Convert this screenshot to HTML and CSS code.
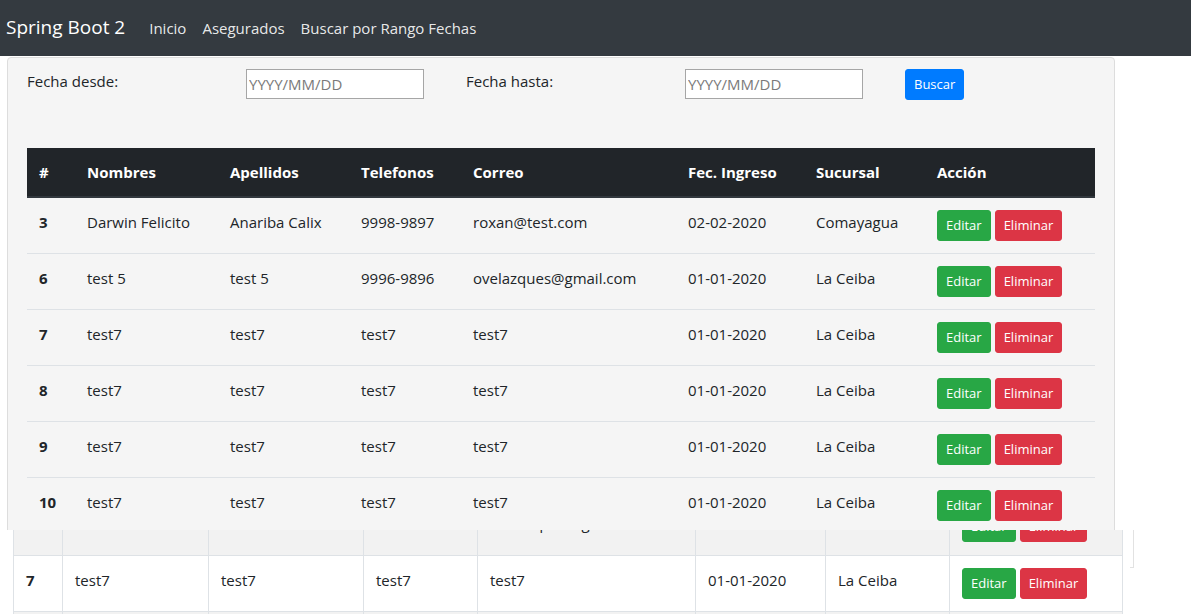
FILE: index.html
```html
<!DOCTYPE html>
<html lang="es">
<head>
<meta charset="utf-8">
<title>Spring Boot 2</title>
<link rel="stylesheet" href="styles.css">
</head>
<body>
<nav class="navbar">
  <a class="brand" href="#">Spring Boot 2</a>
  <ul class="nav-links">
    <li><a href="#">Inicio</a></li>
    <li><a href="#">Asegurados</a></li>
    <li><a href="#">Buscar por Rango Fechas</a></li>
  </ul>
</nav>

<div class="page-top">
  <div class="card">
    <form class="filter-row">
      <label class="filter-label">Fecha desde:</label>
      <input class="date-input" type="text" placeholder="YYYY/MM/DD">
      <label class="filter-label">Fecha hasta:</label>
      <input class="date-input" type="text" placeholder="YYYY/MM/DD">
      <div><button type="button" class="btn btn-primary">Buscar</button></div>
    </form>

    <table class="data-table">
      <colgroup>
        <col style="width:48px"><col style="width:143px"><col style="width:131px"><col style="width:112px">
        <col style="width:215px"><col style="width:128px"><col style="width:121px"><col style="width:170px">
      </colgroup>
      <thead>
        <tr><th>#</th><th>Nombres</th><th>Apellidos</th><th>Telefonos</th><th>Correo</th><th>Fec. Ingreso</th><th>Sucursal</th><th>Acción</th></tr>
      </thead>
      <tbody>
        <tr><td class="id">3</td><td>Darwin Felicito</td><td>Anariba Calix</td><td>9998-9897</td><td>roxan@test.com</td><td>02-02-2020</td><td>Comayagua</td><td><div class="actions"><button class="btn btn-success">Editar</button><button class="btn btn-danger">Eliminar</button></div></td></tr>
        <tr><td class="id">6</td><td>test 5</td><td>test 5</td><td>9996-9896</td><td>ovelazques@gmail.com</td><td>01-01-2020</td><td>La Ceiba</td><td><div class="actions"><button class="btn btn-success">Editar</button><button class="btn btn-danger">Eliminar</button></div></td></tr>
        <tr><td class="id">7</td><td>test7</td><td>test7</td><td>test7</td><td>test7</td><td>01-01-2020</td><td>La Ceiba</td><td><div class="actions"><button class="btn btn-success">Editar</button><button class="btn btn-danger">Eliminar</button></div></td></tr>
        <tr><td class="id">8</td><td>test7</td><td>test7</td><td>test7</td><td>test7</td><td>01-01-2020</td><td>La Ceiba</td><td><div class="actions"><button class="btn btn-success">Editar</button><button class="btn btn-danger">Eliminar</button></div></td></tr>
        <tr><td class="id">9</td><td>test7</td><td>test7</td><td>test7</td><td>test7</td><td>01-01-2020</td><td>La Ceiba</td><td><div class="actions"><button class="btn btn-success">Editar</button><button class="btn btn-danger">Eliminar</button></div></td></tr>
        <tr><td class="id">10</td><td>test7</td><td>test7</td><td>test7</td><td>test7</td><td>01-01-2020</td><td>La Ceiba</td><td><div class="actions"><button class="btn btn-success">Editar</button><button class="btn btn-danger">Eliminar</button></div></td></tr>
      </tbody>
    </table>
  </div>
</div>

<div class="page-bottom">
  <table class="bordered-table">
    <colgroup>
      <col style="width:49px"><col style="width:146px"><col style="width:155px"><col style="width:114px">
      <col style="width:218px"><col style="width:130px"><col style="width:124px"><col style="width:173px">
    </colgroup>
    <tbody>
      <tr class="striped first-row"><td class="id">6</td><td>test 5</td><td>test 5</td><td>9996-9896</td><td>ovelazques@gmail.com</td><td>01-01-2020</td><td>La Ceiba</td><td><div class="actions"><button class="btn btn-success">Editar</button><button class="btn btn-danger">Eliminar</button></div></td></tr>
      <tr><td class="id">7</td><td>test7</td><td>test7</td><td>test7</td><td>test7</td><td>01-01-2020</td><td>La Ceiba</td><td><div class="actions"><button class="btn btn-success">Editar</button><button class="btn btn-danger">Eliminar</button></div></td></tr>
      <tr class="striped"><td class="id">8</td><td>test7</td><td>test7</td><td>test7</td><td>test7</td><td>01-01-2020</td><td>La Ceiba</td><td><div class="actions"><button class="btn btn-success">Editar</button><button class="btn btn-danger">Eliminar</button></div></td></tr>
    </tbody>
  </table>
  <span class="edge-mark"></span>
</div>
</body>
</html>
```

FILE: styles.css
```css
html, body {
  margin: 0;
  padding: 0;
  overflow: hidden;
  background: #ffffff;
}

body {
  font-family: "Open Sans", "Noto Sans", sans-serif;
  font-size: 15px;
  line-height: 24px;
  color: #212529;
  height: 614px;
}

/* ---------- navbar ---------- */
.navbar {
  height: 56px;
  background: #343a40;
  display: flex;
  align-items: center;
  padding-left: 6px;
  box-sizing: border-box;
}

.brand {
  font-size: 19px;
  line-height: 30px;
  color: #ffffff;
  text-decoration: none;
  margin-right: 16px;
  margin-top: -2px;
}

.nav-links {
  list-style: none;
  display: flex;
  margin: 0;
  padding: 0;
}

.nav-links a {
  display: block;
  padding: 8px 8px;
  color: rgba(255, 255, 255, 0.9);
  text-decoration: none;
  font-size: 15px;
  line-height: 24px;
}

/* ---------- top area ---------- */
.page-top {
  height: 474px;
  overflow: hidden;
}

.card {
  margin: 1px 0 0 7px;
  width: 1108px;
  box-sizing: border-box;
  background: #f5f5f5;
  border: 1px solid #dddddd;
  border-radius: 4px;
  padding: 11px 19px 20px 19px;
}

.filter-row {
  display: grid;
  grid-template-columns: 219px 220px 219px 220px auto;
  align-items: start;
  margin: 0 0 48px 0;
  height: 31px;
}

.filter-label {
  line-height: 24px;
  font-size: 15px;
}

.date-input {
  width: 178px;
  height: 30px;
  box-sizing: border-box;
  border: 1px solid #a6a6a6;
  padding: 0 2px;
  font-family: "Open Sans", "Noto Sans", sans-serif;
  font-size: 15px;
  background: #ffffff;
  color: #212529;
  outline: none;
}

.date-input::placeholder {
  color: #7a7a7a;
}

/* ---------- buttons ---------- */
.btn {
  display: inline-block;
  font-family: "Open Sans", "Noto Sans", sans-serif;
  font-size: 13px;
  line-height: 21px;
  padding: 4px 8px;
  border: 1px solid transparent;
  border-radius: 3px;
  color: #ffffff;
  cursor: pointer;
}

.btn-primary { background: #007bff; border-color: #007bff; }
.btn-success { background: #28a745; border-color: #28a745; }
.btn-danger  { background: #dc3545; border-color: #dc3545; }

.actions {
  display: flex;
  gap: 4px;
}

/* ---------- data table ---------- */
.data-table {
  width: 1068px;
  border-collapse: collapse;
  table-layout: fixed;
}

.data-table th {
  background: #212529;
  color: #ffffff;
  font-weight: 700;
  text-align: left;
  padding: 12px;
  line-height: 24px;
  border-bottom: 2px solid #32383e;
  vertical-align: bottom;
}

.data-table td {
  padding: 12px;
  vertical-align: top;
  border-top: 1px solid #dee2e6;
  line-height: 24px;
}

.id {
  font-weight: 700;
}

/* ---------- bottom area ---------- */
.page-bottom {
  height: 84px;
  overflow: hidden;
  display: flex;
  align-items: flex-start;
  padding-left: 13px;
}

.bordered-table {
  width: 1109px;
  border-collapse: collapse;
  table-layout: fixed;
  margin-top: -32px;
  background: #ffffff;
  flex: none;
}

.bordered-table td {
  padding: 12px;
  vertical-align: top;
  border: 1px solid #dee2e6;
  line-height: 24px;
}

.bordered-table .first-row td {
  padding-bottom: 13px;
}

.bordered-table .striped td {
  background: #f2f2f2;
}

.edge-mark {
  flex: none;
  width: 3px;
  height: 37px;
  margin: 0 0 0 7px;
  border-right: 1px solid #e2e2e2;
  border-bottom: 1px solid #e2e2e2;
}
```
